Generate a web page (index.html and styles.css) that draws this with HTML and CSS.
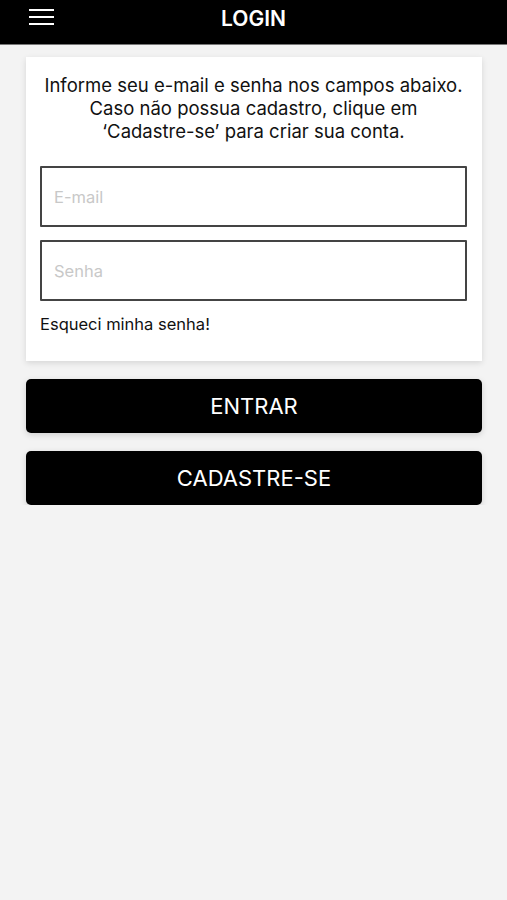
FILE: index.html
```html
<!DOCTYPE html>
<html>
    <head>
        <meta charset="UTF-8">
        <title>Login</title>
        <link rel="stylesheet" href="styles.css">
    </head>
    <body>
        <div class="topbar">
            <span class="menu-icon">
                <svg width="26" height="18" viewBox="0 0 26 18">
                    <rect x="0" y="1" width="25" height="2" fill="#fff"/>
                    <rect x="0" y="8" width="25" height="2" fill="#fff"/>
                    <rect x="0" y="15" width="25" height="2" fill="#fff"/>
                </svg>
            </span>
            <h1>LOGIN</h1>
        </div>

        <div class="content">
            <form class="card">
                <p class="intro">Informe seu e-mail e senha nos campos abaixo.<br>Caso não possua cadastro, clique em<br>‘Cadastre-se’ para criar sua conta.</p>
                <input type="text" class="input" name="email" placeholder="E-mail">
                <input type="password" class="input" name="senha" placeholder="Senha">
                <a href="#" class="forgot">Esqueci minha senha!</a>
            </form>

            <button class="btn">ENTRAR</button>
            <button class="btn">CADASTRE-SE</button>
        </div>
    </body>
</html>
```

FILE: styles.css
```css
body{
    margin:0;
    background-color:#f3f3f3;
    font-family: Inter, 'Noto Sans', sans-serif;
}

.topbar{
    position:relative;
    height:44px;
    background-color:#000;
    border-bottom:1px solid #777;
    display:flex;
    align-items:center;
    justify-content:center;
}

.topbar h1{
    margin:0;
    color:#fff;
    font-size:21px;
    font-weight:600;
    margin-top:-8px;
}

.menu-icon{
    position:absolute;
    left:29px;
    top:8px;
    line-height:0;
}

.content{
    padding:12px 25px 0 26px;
    display:flex;
    flex-direction:column;
}

.card{
    background-color:#fff;
    box-shadow:0 2px 6px rgba(0,0,0,0.12);
    padding:17px 15px 27px 14px;
    display:flex;
    flex-direction:column;
}

.intro{
    margin:0 0 23px 0;
    text-align:center;
    font-size:18.5px;
    line-height:23px;
    color:#111;
}

.input{
    height:61px;
    box-sizing:border-box;
    border:2px solid #444;
    border-radius:1px;
    padding:0 12px;
    font-size:16.5px;
    font-family:inherit;
    margin-bottom:13px;
    outline:none;
}

.input::placeholder{
    color:#c8c8c8;
}

.forgot{
    color:#111;
    text-decoration:none;
    font-size:16.5px;
    margin-top:0;
}

.btn{
    height:54px;
    margin-top:18px;
    border:none;
    border-radius:5px;
    background-color:#000;
    color:#fff;
    font-family:inherit;
    font-size:22px;
    box-shadow:0 2px 6px rgba(0,0,0,0.15);
}
```
